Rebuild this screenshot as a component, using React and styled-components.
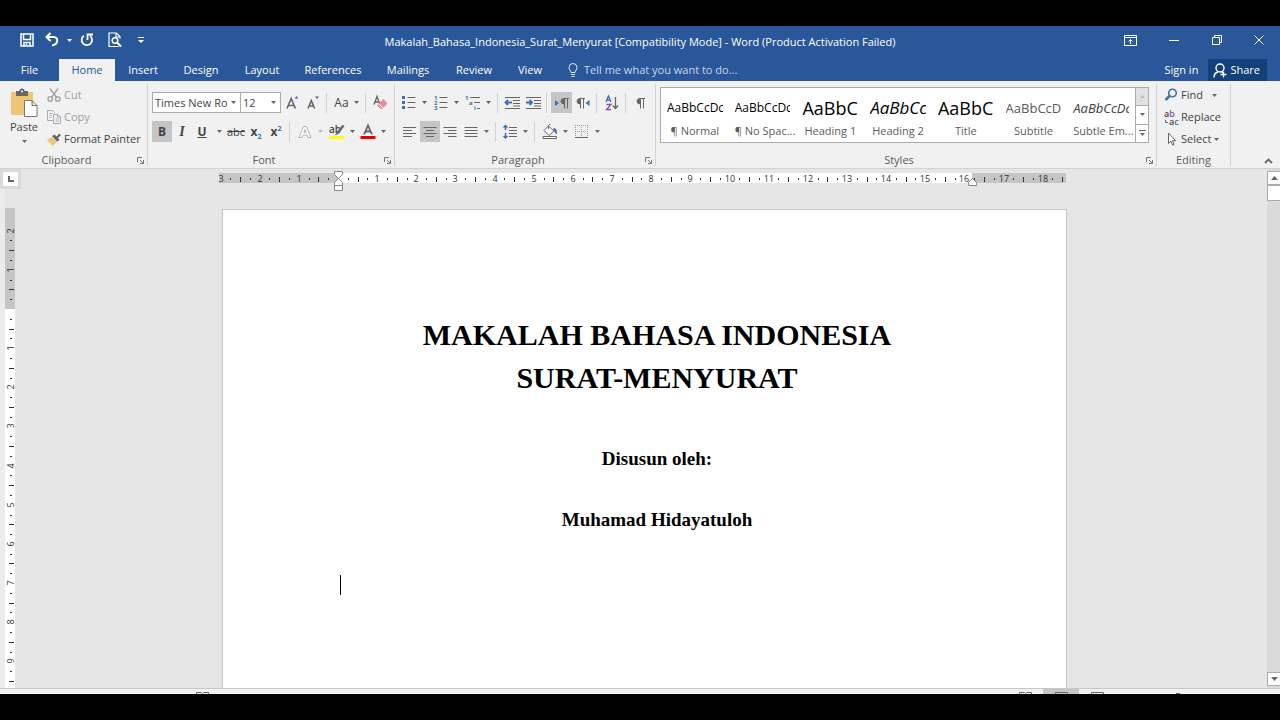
import React from 'react';
import styled, { createGlobalStyle, ThemeProvider } from 'styled-components';

const theme = {
  blue: '#2a579a',
  blueDark: '#124078',
  ribbon: '#f1f1f1',
  canvas: '#e6e6e6',
  line: '#d2d2d2',
  border: '#ababab',
  pressed: '#c5c5c5',
  text: '#444444',
  muted: '#a0a0a0',
};

const GlobalStyle = createGlobalStyle`
  * {
    box-sizing: border-box;
  }
  body {
    margin: 0;
    background: #000;
    font-family: 'Open Sans', 'Noto Sans', sans-serif;
    font-size: 11px;
    line-height: 16px;
  }
  button, select, input {
    font: inherit;
    color: inherit;
  }
  svg {
    display: block;
    flex: none;
    overflow: visible;
  }
`;

const Screen = styled.div`
  height: 100vh;
  padding: 26px 0;
  background: #000;
`;

const Window = styled.div`
  height: 100%;
  display: flex;
  flex-direction: column;
  overflow: hidden;
  background: ${({ theme }) => theme.canvas};
  color: ${({ theme }) => theme.text};
`;

/* title bar */

const TitleBar = styled.header`
  display: grid;
  grid-template-columns: 1fr auto 1fr;
  align-items: center;
  height: 32px;
  background: ${({ theme }) => theme.blue};
  color: #fff;
`;

const QuickAccess = styled.div`
  display: flex;
  align-items: center;
  align-self: start;
  height: 28px;
  padding-left: 17px;
`;

const WindowControls = styled.div`
  display: flex;
  align-items: center;
  align-self: start;
  justify-content: flex-end;
  height: 28px;
`;

const BarButton = styled.button`
  display: flex;
  align-items: center;
  justify-content: center;
  width: ${({ $w }) => $w || 20}px;
  height: 24px;
  padding: 0;
  border: none;
  background: transparent;
  color: #fff;
`;

const WindowTitle = styled.h1`
  margin: 0;
  font-size: 11px;
  font-weight: 400;
  white-space: nowrap;
`;

/* tabs */

const TabBar = styled.nav`
  display: flex;
  align-items: flex-end;
  height: 23px;
  background: ${({ theme }) => theme.blue};
  color: #fff;
`;

const Tab = styled.button`
  height: 22px;
  width: ${({ $w }) => $w}px;
  padding: 0;
  border: none;
  white-space: nowrap;
  background: ${({ $active, theme }) => ($active ? theme.ribbon : 'transparent')};
  color: ${({ $active, theme }) => ($active ? theme.blue : '#fff')};
`;

const TellMe = styled.label`
  display: flex;
  align-items: center;
  flex: 1;
  gap: 6px;
  height: 22px;
  padding-left: 13px;
  color: #c9d6ea;
`;

const TellMeInput = styled.input`
  width: 200px;
  padding: 0;
  border: none;
  outline: none;
  background: transparent;

  &::placeholder {
    color: #c9d6ea;
    opacity: 1;
  }
`;

const ShareButton = styled.button`
  display: flex;
  align-items: center;
  gap: 3px;
  height: 22px;
  margin-right: 13px;
  padding: 0 7px 0 5px;
  border: none;
  background: ${({ theme }) => theme.blueDark};
  color: #fff;
`;

/* ribbon */

const Ribbon = styled.section`
  display: flex;
  height: 88px;
  padding-top: 3px;
  background: ${({ theme }) => theme.ribbon};
  border-bottom: 1px solid ${({ theme }) => theme.line};
`;

const Group = styled.div`
  display: flex;
  flex-direction: column;
  width: ${({ $w }) => ($w ? `${$w}px` : 'auto')};
  flex: ${({ $w }) => ($w ? 'none' : '1')};
  min-width: 0;
  height: 82px;
  border-right: 1px solid ${({ theme }) => theme.line};
`;

const GroupBody = styled.div`
  flex: 1;
  display: flex;
  flex-direction: ${({ $row }) => ($row ? 'row' : 'column')};
  min-height: 0;
  padding-left: 4px;
`;

const GroupFooter = styled.div`
  display: grid;
  grid-template-columns: ${({ $launcher }) => ($launcher ? '1fr 14px' : '1fr')};
  align-items: center;
  justify-items: center;
  height: 14px;
  color: #5c5c5c;
`;

const Launcher = styled.button`
  padding: 0;
  border: none;
  background: transparent;
`;

const PasteButton = styled.button`
  display: flex;
  flex-direction: column;
  align-items: center;
  width: 40px;
  padding: 5px 0 0;
  border: none;
  background: transparent;
`;

const PasteText = styled.span`
  margin-bottom: 5px;
`;

const ButtonStack = styled.div`
  display: flex;
  flex-direction: column;
`;

const LineButton = styled.button`
  display: flex;
  align-items: center;
  gap: 3px;
  height: 22px;
  padding: 0 3px;
  border: none;
  background: transparent;
  white-space: nowrap;
  color: ${({ $disabled, theme }) => ($disabled ? theme.muted : theme.text)};
`;

const FindLabel = styled.span`
  width: 28px;
  text-align: left;
`;

const ToolRow = styled.div`
  display: flex;
  align-items: center;
  height: 21px;
  margin-top: ${({ $top }) => $top}px;
`;

const ToolButton = styled.button`
  display: flex;
  align-items: center;
  justify-content: center;
  gap: 5px;
  width: ${({ $w }) => $w || 20}px;
  height: 21px;
  padding: 0;
  border: none;
  background: ${({ $pressed, theme }) => ($pressed ? theme.pressed : 'transparent')};
`;

const Divider = styled.span`
  width: 1px;
  height: 20px;
  margin: 0 4px 0 3px;
  background: ${({ theme }) => theme.line};
`;

const Combo = styled.label`
  position: relative;
  width: ${({ $w }) => $w}px;
  height: 21px;
  margin-right: ${({ $end }) => ($end ? '2px' : '-1px')};
  background: #fff;
  border: 1px solid ${({ theme }) => theme.border};
`;

const ComboSelect = styled.select`
  width: 100%;
  height: 100%;
  padding: 0 0 0 2px;
  border: none;
  outline: none;
  appearance: none;
  background: transparent;
`;

const ComboArrow = styled.span`
  position: absolute;
  right: 4px;
  top: 8px;
  pointer-events: none;
`;

/* style gallery */

const Gallery = styled.div`
  display: flex;
  height: 56px;
  margin-top: 3px;
  margin-right: 7px;
  background: #fff;
  border: 1px solid ${({ theme }) => theme.border};
`;

const StyleItem = styled.button`
  display: flex;
  flex-direction: column;
  flex: 1 1 0;
  min-width: 0;
  height: 54px;
  padding: 6px 6px 0;
  border: none;
  background: transparent;
  text-align: center;
`;

const StylePreview = styled.span`
  width: 100%;
  height: 29px;
  overflow: hidden;
  white-space: nowrap;
  font-size: ${({ $size }) => $size}px;
  line-height: 28px;
  font-style: ${({ $italic }) => ($italic ? 'italic' : 'normal')};
  color: ${({ $color }) => $color || '#000'};
  text-align: left;
`;

const StyleName = styled.span`
  width: 100%;
  white-space: nowrap;
  color: #5c5c5c;
`;

const GalleryArrows = styled.div`
  display: flex;
  flex-direction: column;
  width: 13px;
`;

const GalleryArrow = styled.button`
  flex: 1;
  display: flex;
  align-items: center;
  justify-content: center;
  padding: 0;
  border: none;
  border-left: 1px solid ${({ theme }) => theme.border};
  border-top: ${({ $first, theme }) => ($first ? 'none' : `1px solid ${theme.border}`)};
  background: ${({ $first }) => ($first ? '#e1e1e1' : '#fff')};
`;

const Collapse = styled.div`
  display: flex;
  align-items: flex-end;
  justify-content: flex-end;
  width: 49px;
  padding: 0 7px 4px 0;
`;

/* workspace */

const Workspace = styled.main`
  flex: 1;
  display: flex;
  min-height: 0;
`;

const LeftGutter = styled.div`
  display: flex;
  flex-direction: column;
  width: 22px;
  background: linear-gradient(90deg, #ececec 5px, transparent 5px);
`;

const TabSelector = styled.button`
  display: flex;
  align-items: center;
  justify-content: center;
  width: 21px;
  height: 20px;
  margin-bottom: 19px;
  padding: 0;
  border: 3px solid #dadada;
  background: #fff;
`;

const Center = styled.div`
  flex: 1;
  display: flex;
  flex-direction: column;
  align-items: center;
  min-width: 0;
  overflow: hidden;
`;

const RulerStrip = styled.div`
  width: 100%;
  max-width: 845px;
  height: 40px;
`;

const Page = styled.article`
  flex: 1;
  width: 100%;
  max-width: 845px;
  padding: 103px 92px 0 117px;
  background: #fff;
  border: 1px solid #c6c6c6;
  border-bottom: none;
  color: #000;
  font-family: 'Liberation Serif', 'Times New Roman', serif;
  font-weight: 700;
  text-align: center;
`;

const DocTitle = styled.h2`
  margin: 0 0 46px;
  font-size: 30px;
  line-height: 43px;
`;

const DocLine = styled.p`
  margin: 0 0 33px;
  font-size: 19px;
  line-height: 28px;
`;

const TextCursor = styled.div`
  width: 1px;
  height: 20px;
  margin-top: 41px;
  background: #000;
`;

const ScrollBar = styled.div`
  display: flex;
  flex-direction: column;
  width: 13px;
  padding: 2px 0;
  background: #dadada;
`;

const ScrollButton = styled.button`
  display: flex;
  align-items: center;
  justify-content: center;
  width: 13px;
  height: 14px;
  padding: 0;
  background: #fff;
  border: 1px solid ${({ theme }) => theme.border};
  border-right: none;
`;

const ScrollThumb = styled.div`
  height: 16px;
  background: #fff;
  border: 1px solid ${({ theme }) => theme.border};
  border-right: none;
`;

const ScrollTrack = styled.div`
  flex: 1;
`;

const StatusBar = styled.footer`
  display: flex;
  justify-content: space-between;
  height: 6px;
  padding: 0 100px 0 196px;
  overflow: hidden;
  background: ${({ theme }) => theme.ribbon};
  border-top: 1px solid #c6c6c6;
`;

const ViewButtons = styled.div`
  display: flex;
`;

const ViewButton = styled.button`
  display: flex;
  justify-content: center;
  width: 36px;
  height: 22px;
  padding: 3px 0 0;
  border: none;
  background: ${({ $pressed, theme }) => ($pressed ? theme.pressed : 'transparent')};
`;

const ZoomHandle = styled.span`
  width: 4px;
  height: 10px;
  margin: 4px 0 0 61px;
  background: #666;
`;

/* icons */

const Icon = ({ w = 16, h = 16, children, ...rest }) => (
  <svg width={w} height={h} viewBox={`0 0 ${w} ${h}`} fill="none" stroke="#666" aria-hidden="true" {...rest}>
    {children}
  </svg>
);

const Caret = ({ color = '#666', up }) => (
  <Icon w={5} h={3} stroke="none" fill={color}>
    <path d={up ? 'M0 3h5L2.5 0z' : 'M0 0h5L2.5 3z'} />
  </Icon>
);

const ScrollArrow = ({ up }) => (
  <Icon w={7} h={4} stroke="none" fill="#666">
    <path d={up ? 'M0 4h7L3.5 0z' : 'M0 0h7L3.5 4z'} />
  </Icon>
);

const SaveIcon = () => (
  <Icon w={14} h={14} stroke="#fff" strokeWidth="1.5">
    <path d="M1 1h12v12H1zM3.500 1v5.500h7V1M4 13V9.500h6V13" />
    <path d="M6.500 10.500v2" />
  </Icon>
);

const UndoIcon = () => (
  <Icon w={14} h={14} stroke="#fff" strokeWidth="2">
    <path d="M5.500 0L1.500 4l4 4M2 4h6.500c5.500 0 5 7.500-1.500 8.500" />
  </Icon>
);

const RedoIcon = () => (
  <Icon w={14} h={14} stroke="#fff" strokeWidth="1.800">
    <path d="M3.800 2.800a5.200 5.200 0 1 0 6.400.2M7.500 7V1.500H13" />
  </Icon>
);

const PreviewIcon = () => (
  <Icon w={14} h={16} stroke="#fff" strokeWidth="1.200">
    <path d="M10.500 14.500H1V1h7.500l3.500 3.500v2M8 1v4h4" />
    <circle cx="7" cy="8.500" r="2.800" strokeWidth="1.500" />
    <path d="M9 10.500l4 4" strokeWidth="2" />
  </Icon>
);

const CustomizeIcon = () => (
  <Icon w={6} h={6} stroke="none" fill="#fff">
    <path d="M0 0h6v1H0zM0 3h6L3 6z" />
  </Icon>
);

const DisplayIcon = () => (
  <Icon w={13} h={11} stroke="#fff">
    <path d="M.5.5h12v10H.5zM.5 2.500h12M6.500 9V4.500M4.500 6.500l2-2 2 2" />
  </Icon>
);

const MinimizeIcon = () => (
  <Icon w={10} h={10} stroke="#fff">
    <path d="M0 5.500h10" />
  </Icon>
);

const RestoreIcon = () => (
  <Icon w={10} h={10} stroke="#fff">
    <path d="M.5 2.500h7v7h-7zM2.500 2.500v-2h7v7h-2" />
  </Icon>
);

const CloseIcon = () => (
  <Icon w={10} h={10} stroke="#fff">
    <path d="M.5.5l9 9M9.500.5l-9 9" />
  </Icon>
);

const BulbIcon = () => (
  <Icon w={10} h={14} stroke="#dfe8f5">
    <path d="M3 9.500C3 7.500 1 7 1 4.500a4 4 0 0 1 8 0C9 7 7 7.500 7 9.500zM3 11.500h4M3.500 13.500h3" />
  </Icon>
);

const PersonIcon = () => (
  <Icon w={14} h={15} stroke="#fff" strokeWidth="1.400">
    <circle cx="7" cy="5" r="4" />
    <path d="M1 14.500c0-3.500 2-5 4-5.500M8.500 8.800l2 1.700M10.500 8.500v6M7.500 11.500h6" />
  </Icon>
);

const PasteIcon = () => (
  <Icon w={28} h={30} stroke="none">
    <path fill="#eec575" d="M1 3h22v23H1z" />
    <path fill="#666" d="M6 2h3.500a2.500 2.500 0 0 1 5 0H18v5H6z" />
    <circle cx="12" cy="2.500" r="1" fill="#fff" />
    <path fill="#fff" stroke="#777" d="M14.500 11.500h7.500l5 5v11H14.500zM22 11.500v5h5" />
  </Icon>
);

const CutIcon = () => (
  <Icon w={14} h={14} stroke="#a6a6a6" strokeWidth="1.500">
    <path d="M3 .5l6.500 9M11 .5l-6.500 9" />
    <circle cx="3.200" cy="11" r="2.200" />
    <circle cx="10.800" cy="11" r="2.200" />
  </Icon>
);

const CopyIcon = () => (
  <Icon w={14} h={14} stroke="#b0a8b5">
    <path d="M6 10.500H.5V.5h5l2 2v1M2.500 3.500h3M2.500 5.500h2M2.500 7.500h2" />
    <path fill="#f6f3f7" d="M6.500 4.500h4.500l2.500 2.500v6.500h-7zM10.500 4.500V7h3M8.500 9h3.500M8.500 11h3.500" />
  </Icon>
);

const BrushIcon = () => (
  <Icon w={14} h={13} stroke="none">
    <path fill="#eec575" d="M0 6.500l5-2.500 5 5-4.500 4z" />
    <path fill="#666" d="M5 3l2.500-1.500 2 2L12.500.5l1.500 1.500-3 3 1.500 2L10 8.500z" />
  </Icon>
);

const LauncherIcon = () => (
  <Icon w={7} h={7} stroke="#777">
    <path d="M.5 5V.5H5M3 3l3 3M6.500 3v3.500H3" />
  </Icon>
);

const GrowFontIcon = ({ down }) => (
  <Icon w={14} h={16}>
    <path d={down ? 'M2 13.500l3.300-8 3.300 8M3.200 11h4.300' : 'M1 13.500l4.200-10 4.200 10M2.500 10.500h5.500'} strokeWidth="1.600" />
    <path d={down ? 'M9 1.500h4l-2 2.500z' : 'M8.500 3.500h4l-2-2.500z'} fill="#3e6db5" stroke="none" />
  </Icon>
);

const ClearIcon = () => (
  <Icon>
    <path d="M2 9.500L5 1.500l3 8M3 7h4" strokeWidth="1.400" />
    <path d="M11.500 4l4 4.500-6 6-4.500-4z" fill="#e88a9b" stroke="none" />
    <path d="M6.800 8.800l4.400 4.200" stroke="#fff" />
  </Icon>
);

const HighlightIcon = () => (
  <Icon>
    <text x="0" y="9" fontSize="10" fontWeight="600" fill="#444" stroke="none">ab</text>
    <path d="M14.500 1.500l-6 7.500" strokeWidth="2.500" />
    <path d="M8.500 8l-3 3.500 4-1.500z" fill="#666" stroke="none" />
    <path d="M.5 12h15v3H.5z" fill="#ffff00" stroke="none" />
  </Icon>
);

const FontColorIcon = () => (
  <Icon>
    <path d="M4 10.500L8 1.500l4 9M5.500 7.500h5" strokeWidth="1.800" />
    <path d="M.5 12h15v3H.5z" fill="#e80000" stroke="none" />
  </Icon>
);

const EffectsIcon = () => (
  <Icon stroke="#b5b5b5">
    <path d="M2 13.500L6.500 2.500h3L14 13.500h-3L10 11H6l-1 2.500zM7 8.500h2l-1-3z" fill="#fff" />
  </Icon>
);

const bulletRows = [2.5, 7.5, 12.5];
const ListIcon = ({ numbered }) => (
  <Icon>
    {bulletRows.map((y, i) => (
      <React.Fragment key={y}>
        {numbered ? (
          <text x="1" y={y + 2.5} fontSize="6" fontWeight="700" fill="#3e6db5" stroke="none">{i + 1}</text>
        ) : (
          <rect x="1" y={y - 1.5} width="3" height="3" fill="#3e6db5" stroke="none" />
        )}
        <path d={`M6.500 ${y}h8`} />
      </React.Fragment>
    ))}
  </Icon>
);

const MultilevelIcon = () => (
  <Icon>
    <g fontSize="6" fontWeight="700" fill="#3e6db5" stroke="none">
      <text x="0" y="5">1</text>
      <text x="4" y="10" fill="#666">a</text>
      <text x="9" y="15">i</text>
    </g>
    <path d="M5 2.500h10M9 7.500h6M12 13.500h3" />
  </Icon>
);

const IndentIcon = ({ right }) => (
  <Icon>
    <path d="M1 2.500h15M9 5.500h7M9 8.500h7M1 13.500h15M9 11h7" />
    <path d={right ? 'M1 7.500h6M4.500 5L7 7.500 4.500 10' : 'M1.500 7.500H8M4 5L1.500 7.500 4 10'} stroke="#3e6db5" strokeWidth="1.800" />
  </Icon>
);

const ALIGN = {
  left: ['M1 3.500h13', 'M1 6.500h9', 'M1 9.500h13', 'M1 12.500h9'],
  center: ['M1.500 3.500h13', 'M4 6.500h8', 'M1.500 9.500h13', 'M4 12.500h8'],
  right: ['M1.500 3.500h13', 'M6 6.500h8.500', 'M1.500 9.500h13', 'M6 12.500h8.500'],
  justify: ['M1.500 3.500h13', 'M1.500 6.500h13', 'M1.500 9.500h13', 'M1.500 12.500h13'],
};
const AlignIcon = ({ kind }) => (
  <Icon>
    <path d={ALIGN[kind].join('')} />
  </Icon>
);

const PilcrowShape = ({ x = 0 }) => (
  <g transform={`translate(${x} 0)`}>
    <path d="M4.500 8a3 2.800 0 0 1 0-5.500z" fill="#666" />
    <path d="M4 2.500h6M5.500 2.500v10M8.500 2.500v10" />
  </g>
);

const DirectionIcon = ({ rtl }) => (
  <Icon w={14} h={14}>
    <PilcrowShape x={rtl ? -1 : 4} />
    <path d={rtl ? 'M13.500 4v6l-4-3z' : 'M0 4v6l4-3z'} fill="#3e6db5" stroke="none" />
  </Icon>
);

const PilcrowIcon = () => (
  <Icon w={12} h={14}>
    <PilcrowShape x={1} />
  </Icon>
);

const SortIcon = () => (
  <Icon w={14} h={16}>
    <path d="M1 7l2.500-6L6 7M2 5h3" stroke="#3e6db5" strokeWidth="1.300" />
    <path d="M1.500 9.500H6l-4.500 5H6" stroke="#8a4fa0" strokeWidth="1.300" />
    <path d="M10.500 2v11M8 10.500l2.500 3 2.500-3" strokeWidth="1.300" />
  </Icon>
);

const SpacingIcon = () => (
  <Icon>
    <path d="M3.500 1.500v4.500M1.500 3.500l2-2 2 2M3.500 9v5M1.500 12l2 2 2-2" stroke="#3e6db5" strokeWidth="1.500" />
    <path d="M7 3.500h8M7 6.500h8M7 9.500h8M7 12.500h8" />
  </Icon>
);

const ShadingIcon = () => (
  <Icon>
    <path d="M6.500 2l5.500 5-5 4.500-5-5zM6.500 5V1.500a1.500 1.500 0 0 1 2-1" fill="#fff" />
    <path d="M11.500 4c3 0 4 3 3 6.500-1.500-1-1-3-3-4z" fill="#3e6db5" stroke="none" />
    <path d="M1 12.500h13.500v2H1z" fill="#fff" />
  </Icon>
);

const BordersIcon = () => (
  <Icon w={14} h={14}>
    <path d="M0 .5h14M0 6.500h14M.5 0v13M6.500 0v13M12.500 0v13" strokeDasharray="1 1" stroke="#999" />
    <path d="M0 12.500h13" />
  </Icon>
);

const FindIcon = () => (
  <Icon w={14} h={14} stroke="#3e6db5">
    <circle cx="8.500" cy="5" r="3.800" strokeWidth="1.600" />
    <path d="M5.500 8L1.500 12" strokeWidth="2.500" />
  </Icon>
);

const ReplaceIcon = () => (
  <Icon w={14} h={15} stroke="none">
    <path d="M1.500 10v2.500H4" stroke="#3e6db5" />
    <g fontSize="9" fontWeight="600">
      <text x="0" y="7" fill="#444">a<tspan fill="#8a4fa0">b</tspan></text>
      <text x="5" y="15" fill="#444">a<tspan fill="#3e6db5">c</tspan></text>
    </g>
  </Icon>
);

const SelectIcon = () => (
  <Icon w={14} h={14}>
    <path d="M4.500 1v10.500L7 9.200l1.700 4 1.500-.7L8.500 8.700h3.200z" fill="#fff" />
  </Icon>
);

/* rulers */

const CM = 39.15;
const quarters = (from, to) => {
  const marks = [];
  for (let q = Math.ceil(from * 4); q <= to * 4; q += 1) marks.push(q);
  return marks;
};

const HorizontalRuler = () => {
  const zero = 116;
  const end = 750;
  return (
    <svg width="100%" height="40" fontSize="9" textAnchor="middle" fill="#333" role="img" aria-label="Horizontal ruler">
      <rect x="-3" y="4" width="847" height="10" fill="#c5c5c5" />
      <rect x={zero} y="4" width={end - zero} height="10" fill="#fff" />
      {quarters(-3, 18.5).map((q) => {
        const x = Math.round(zero + (q / 4) * CM);
        if (q === 0) return null;
        if (q % 4 === 0) return <text key={q} x={x} y="13">{Math.abs(q / 4)}</text>;
        return q % 2 === 0
          ? <rect key={q} x={x} y="8" width="1" height="5" />
          : <rect key={q} x={x} y="9" width="1" height="2" />;
      })}
      <g fill="#fff" stroke="#888">
        <path d="M112.500 2.500h8v3l-4 4-4-4z" />
        <path d="M112.500 16.500v-3l4-4 4 4v3zM112.500 16.500h8v5h-8z" />
        <path d="M746.500 16.500v-3l4-4 4 4v3z" />
      </g>
    </svg>
  );
};

const VerticalRuler = () => {
  const zero = 101;
  return (
    <svg width="20" height="480" fontSize="9" textAnchor="middle" fill="#333" role="img" aria-label="Vertical ruler">
      <rect x="5" y="0" width="10" height="480" fill="#fff" />
      <rect x="5" y="0" width="10" height={zero} fill="#c5c5c5" />
      {quarters(-2, 9.5).map((q) => {
        const y = Math.round(zero + (q / 4) * CM);
        if (q === 0) return null;
        if (q % 4 === 0) {
          return <text key={q} transform={`translate(14 ${y}) rotate(-90)`}>{Math.abs(q / 4)}</text>;
        }
        return q % 2 === 0
          ? <rect key={q} x="9" y={y} width="5" height="1" />
          : <rect key={q} x="10" y={y} width="2" height="1" />;
      })}
    </svg>
  );
};

/* text glyph buttons */

const Letter = styled.span`
  font-size: ${({ $size }) => $size || 12}px;
  font-weight: ${({ $bold }) => ($bold ? 700 : 400)};
  font-style: ${({ $italic }) => ($italic ? 'italic' : 'normal')};
  font-family: ${({ $serif }) => ($serif ? "'Liberation Serif', serif" : 'inherit')};
  text-decoration: ${({ $line }) => $line || 'none'};

  sub, sup {
    font-size: 7px;
    line-height: 0;
    color: #3e6db5;
  }
`;

const DropButton = ({ w = 11, color, label }) => (
  <ToolButton $w={w} aria-label={label}>
    <Caret color={color} />
  </ToolButton>
);

const Footer = ({ label, launcher = true }) => (
  <GroupFooter $launcher={launcher}>
    <span>{label}</span>
    {launcher && (
      <Launcher aria-label={`${label} settings`}>
        <LauncherIcon />
      </Launcher>
    )}
  </GroupFooter>
);

const TABS = [
  { name: 'Insert', w: 56 },
  { name: 'Design', w: 60 },
  { name: 'Layout', w: 62 },
  { name: 'References', w: 80 },
  { name: 'Mailings', w: 70 },
  { name: 'Review', w: 62 },
  { name: 'View', w: 50 },
];

const STYLES = [
  { name: '¶ Normal', sample: 'AaBbCcDc', size: 12 },
  { name: '¶ No Spac...', sample: 'AaBbCcDc', size: 12 },
  { name: 'Heading 1', sample: 'AaBbC', size: 18 },
  { name: 'Heading 2', sample: 'AaBbCc', size: 17, italic: true },
  { name: 'Title', sample: 'AaBbC', size: 18 },
  { name: 'Subtitle', sample: 'AaBbCcD', size: 13, color: '#5a5a5a' },
  { name: 'Subtle Em...', sample: 'AaBbCcDc', size: 13, italic: true, color: '#404040' },
];

const App = () => {
  return (
    <ThemeProvider theme={theme}>
      <GlobalStyle />
      <Screen>
        <Window>
          <TitleBar>
            <QuickAccess>
              <BarButton aria-label="Save"><SaveIcon /></BarButton>
              <BarButton $w={30} aria-label="Undo"><UndoIcon /></BarButton>
              <Caret color="#fff" />
              <BarButton $w={30} aria-label="Redo"><RedoIcon /></BarButton>
              <BarButton $w={26} aria-label="Print preview"><PreviewIcon /></BarButton>
              <BarButton $w={26} aria-label="Customize"><CustomizeIcon /></BarButton>
            </QuickAccess>
            <WindowTitle>
              Makalah_Bahasa_Indonesia_Surat_Menyurat [Compatibility Mode] - Word (Product Activation Failed)
            </WindowTitle>
            <WindowControls>
              <BarButton $w={43} aria-label="Ribbon display options"><DisplayIcon /></BarButton>
              <BarButton $w={43} aria-label="Minimize"><MinimizeIcon /></BarButton>
              <BarButton $w={43} aria-label="Restore"><RestoreIcon /></BarButton>
              <BarButton $w={42} aria-label="Close"><CloseIcon /></BarButton>
            </WindowControls>
          </TitleBar>

          <TabBar>
            <Tab $w={59}>File</Tab>
            <Tab $w={56} $active>Home</Tab>
            {TABS.map((tab) => (
              <Tab key={tab.name} $w={tab.w}>{tab.name}</Tab>
            ))}
            <TellMe>
              <BulbIcon />
              <TellMeInput aria-label="Tell me" placeholder="Tell me what you want to do..." />
            </TellMe>
            <Tab $w={54}>Sign in</Tab>
            <ShareButton><PersonIcon />Share</ShareButton>
          </TabBar>

          <Ribbon>
            <Group $w={148}>
              <GroupBody $row>
                <PasteButton>
                  <PasteIcon />
                  <PasteText>Paste</PasteText>
                  <Caret />
                </PasteButton>
                <ButtonStack>
                  <LineButton $disabled><CutIcon />Cut</LineButton>
                  <LineButton $disabled><CopyIcon />Copy</LineButton>
                  <LineButton><BrushIcon />Format Painter</LineButton>
                </ButtonStack>
              </GroupBody>
              <Footer label="Clipboard" />
            </Group>

            <Group $w={247}>
              <GroupBody>
                <ToolRow $top={8}>
                  <Combo $w={89}>
                    <ComboSelect aria-label="Font" defaultValue="Times New Ro">
                      <option>Times New Ro</option>
                    </ComboSelect>
                    <ComboArrow><Caret /></ComboArrow>
                  </Combo>
                  <Combo $w={41} $end>
                    <ComboSelect aria-label="Font size" defaultValue="12">
                      <option>12</option>
                    </ComboSelect>
                    <ComboArrow><Caret /></ComboArrow>
                  </Combo>
                  <ToolButton aria-label="Increase font size"><GrowFontIcon /></ToolButton>
                  <ToolButton aria-label="Decrease font size"><GrowFontIcon down /></ToolButton>
                  <Divider />
                  <ToolButton $w={31} aria-label="Change case"><Letter>Aa</Letter><Caret /></ToolButton>
                  <Divider />
                  <ToolButton aria-label="Clear formatting"><ClearIcon /></ToolButton>
                </ToolRow>
                <ToolRow $top={8}>
                  <ToolButton $pressed><Letter $bold>B</Letter></ToolButton>
                  <ToolButton><Letter $italic $bold $serif $size={14}>I</Letter></ToolButton>
                  <ToolButton><Letter $bold $line="underline">U</Letter></ToolButton>
                  <DropButton w={14} label="Underline style" />
                  <ToolButton><Letter $size={11} $line="line-through">abc</Letter></ToolButton>
                  <ToolButton><Letter $bold>x<sub>2</sub></Letter></ToolButton>
                  <ToolButton><Letter $bold>x<sup>2</sup></Letter></ToolButton>
                  <Divider />
                  <ToolButton $w={21} aria-label="Text effects"><EffectsIcon /></ToolButton>
                  <DropButton color="#bbb" label="Text effects options" />
                  <ToolButton $w={21} aria-label="Highlight"><HighlightIcon /></ToolButton>
                  <DropButton label="Highlight color" />
                  <ToolButton aria-label="Font color"><FontColorIcon /></ToolButton>
                  <DropButton label="Font color options" />
                </ToolRow>
              </GroupBody>
              <Footer label="Font" />
            </Group>

            <Group $w={261}>
              <GroupBody>
                <ToolRow $top={8}>
                  <ToolButton aria-label="Bullets"><ListIcon /></ToolButton>
                  <DropButton label="Bullet styles" />
                  <ToolButton $w={21} aria-label="Numbering"><ListIcon numbered /></ToolButton>
                  <DropButton label="Number styles" />
                  <ToolButton $w={21} aria-label="Multilevel list"><MultilevelIcon /></ToolButton>
                  <DropButton label="Multilevel styles" />
                  <Divider />
                  <ToolButton aria-label="Decrease indent"><IndentIcon /></ToolButton>
                  <ToolButton $w={21} aria-label="Increase indent"><IndentIcon right /></ToolButton>
                  <Divider />
                  <ToolButton $w={21} $pressed aria-label="Left to right"><DirectionIcon /></ToolButton>
                  <ToolButton $w={21} aria-label="Right to left"><DirectionIcon rtl /></ToolButton>
                  <Divider />
                  <ToolButton $w={21} aria-label="Sort"><SortIcon /></ToolButton>
                  <Divider />
                  <ToolButton aria-label="Show marks"><PilcrowIcon /></ToolButton>
                </ToolRow>
                <ToolRow $top={8}>
                  <ToolButton $w={21} aria-label="Align left"><AlignIcon kind="left" /></ToolButton>
                  <ToolButton $pressed aria-label="Center"><AlignIcon kind="center" /></ToolButton>
                  <ToolButton aria-label="Align right"><AlignIcon kind="right" /></ToolButton>
                  <ToolButton $w={21} aria-label="Justify"><AlignIcon kind="justify" /></ToolButton>
                  <DropButton label="Justify options" />
                  <Divider />
                  <ToolButton aria-label="Line spacing"><SpacingIcon /></ToolButton>
                  <DropButton label="Line spacing options" />
                  <Divider />
                  <ToolButton $w={21} aria-label="Shading"><ShadingIcon /></ToolButton>
                  <DropButton label="Shading color" />
                  <ToolButton $w={21} aria-label="Borders"><BordersIcon /></ToolButton>
                  <DropButton label="Border styles" />
                </ToolRow>
              </GroupBody>
              <Footer label="Paragraph" />
            </Group>

            <Group>
              <GroupBody>
                <Gallery>
                  {STYLES.map((s) => (
                    <StyleItem key={s.name}>
                      <StylePreview $size={s.size} $italic={s.italic} $color={s.color}>{s.sample}</StylePreview>
                      <StyleName>{s.name}</StyleName>
                    </StyleItem>
                  ))}
                  <GalleryArrows>
                    <GalleryArrow $first aria-label="Previous row"><Caret up color="#bbb" /></GalleryArrow>
                    <GalleryArrow aria-label="Next row"><Caret /></GalleryArrow>
                    <GalleryArrow aria-label="More styles">
                      <Icon w={7} h={6} stroke="none" fill="#666">
                        <path d="M0 0h7v1H0zM1 3h5L3.500 6z" />
                      </Icon>
                    </GalleryArrow>
                  </GalleryArrows>
                </Gallery>
              </GroupBody>
              <Footer label="Styles" />
            </Group>

            <Group $w={74}>
              <GroupBody>
                <LineButton><FindIcon /><FindLabel>Find</FindLabel><Caret /></LineButton>
                <LineButton><ReplaceIcon />Replace</LineButton>
                <LineButton><SelectIcon />Select<Caret /></LineButton>
              </GroupBody>
              <Footer label="Editing" launcher={false} />
            </Group>

            <Collapse>
              <Launcher aria-label="Collapse the ribbon">
                <Icon w={9} h={6} strokeWidth="1.800">
                  <path d="M1 5l3.500-3.500L8 5" />
                </Icon>
              </Launcher>
            </Collapse>
          </Ribbon>

          <Workspace>
            <LeftGutter>
              <TabSelector aria-label="Tab stop">
                <Icon w={6} h={6} strokeWidth="2">
                  <path d="M1 0v5h5" />
                </Icon>
              </TabSelector>
              <VerticalRuler />
            </LeftGutter>
            <Center>
              <RulerStrip>
                <HorizontalRuler />
              </RulerStrip>
              <Page>
                <DocTitle>
                  MAKALAH BAHASA INDONESIA
                  <br />
                  SURAT-MENYURAT
                </DocTitle>
                <DocLine>Disusun oleh:</DocLine>
                <DocLine>Muhamad Hidayatuloh</DocLine>
                <TextCursor />
              </Page>
            </Center>
            <ScrollBar>
              <ScrollButton aria-label="Scroll up"><ScrollArrow up /></ScrollButton>
              <ScrollThumb />
              <ScrollTrack />
              <ScrollButton aria-label="Scroll down"><ScrollArrow /></ScrollButton>
            </ScrollBar>
          </Workspace>

          <StatusBar>
            <Icon w={13} h={12}>
              <path d="M.5 12V3.500h5l1 1 1-1h5V12" />
            </Icon>
            <ViewButtons>
              <ViewButton aria-label="Read mode">
                <Icon w={13} h={12}><path d="M.5 12V.5h5l1 1 1-1h5V12" /></Icon>
              </ViewButton>
              <ViewButton $pressed aria-label="Print layout">
                <Icon w={13} h={12}><path d="M.5.5h12v11H.5z" /></Icon>
              </ViewButton>
              <ViewButton aria-label="Web layout">
                <Icon w={13} h={12}><path d="M.5.5h12v11H.5z" /></Icon>
              </ViewButton>
              <ZoomHandle />
            </ViewButtons>
          </StatusBar>
        </Window>
      </Screen>
    </ThemeProvider>
  );
};

export default App;
